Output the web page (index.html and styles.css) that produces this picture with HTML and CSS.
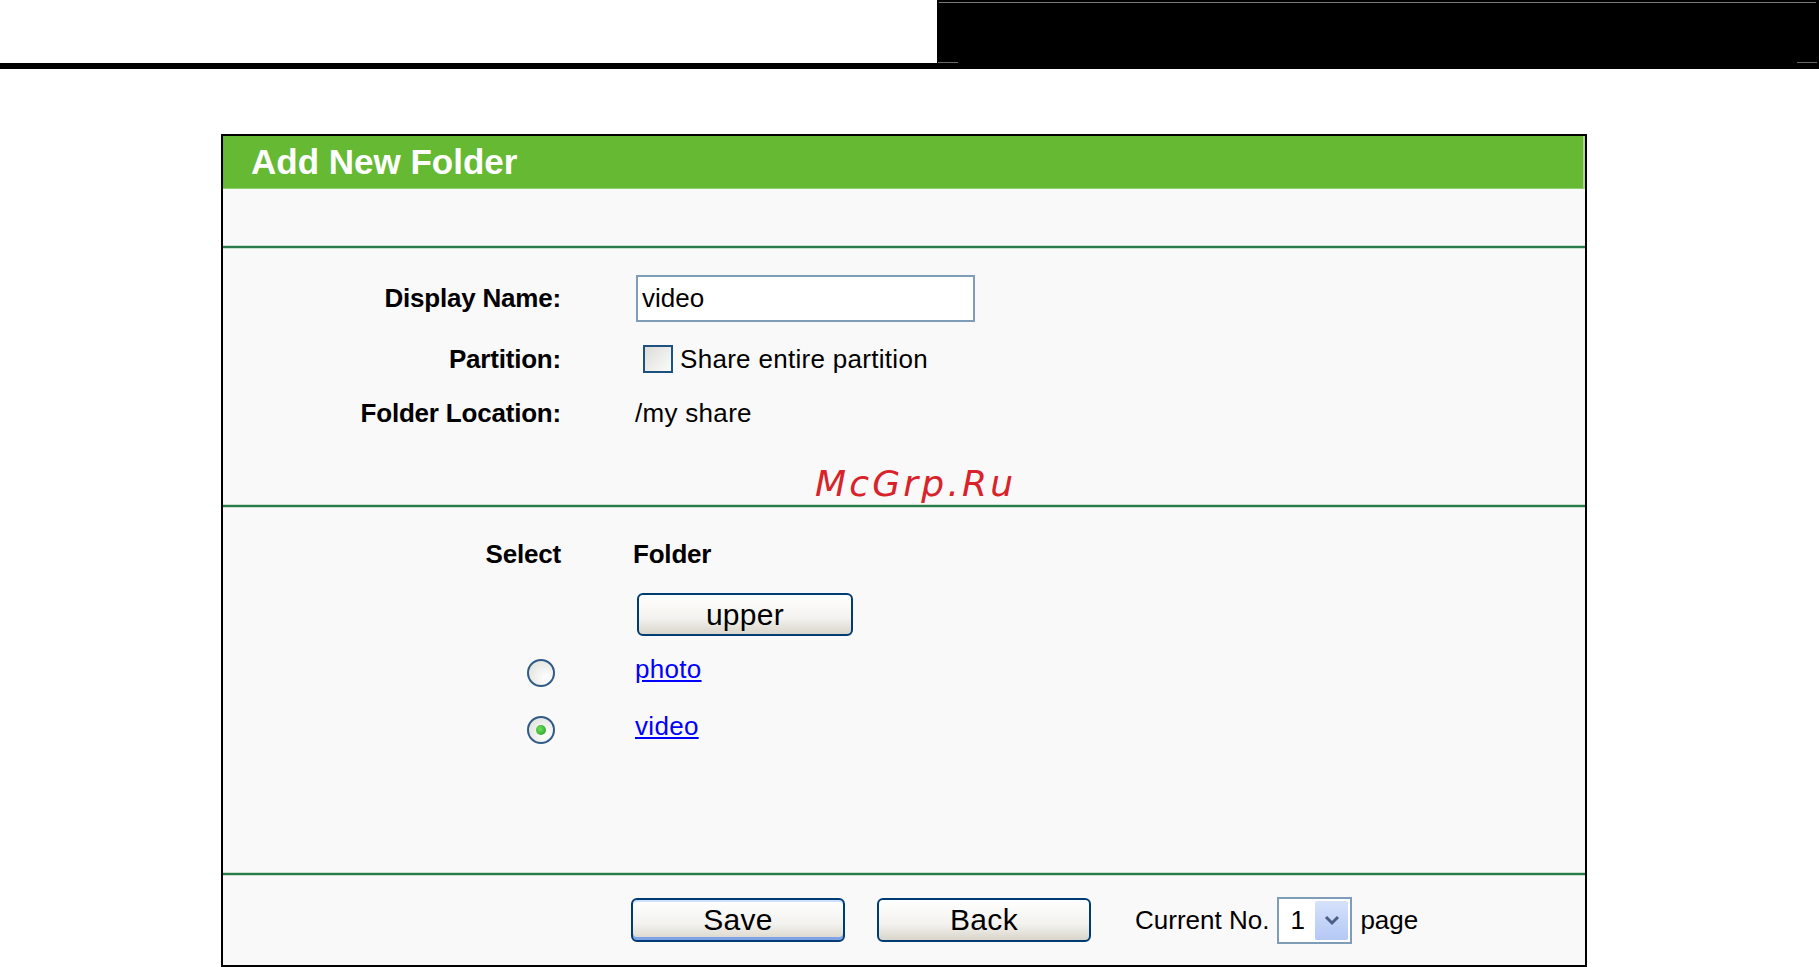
FILE: index.html
```html
<!DOCTYPE html>
<html lang="en">
<head>
  <meta charset="UTF-8" />
  <title>Add New Folder</title>
  <link rel="stylesheet" href="styles.css">
</head>
<body>
  <div class="topbar">
    <div class="topbar-left"></div>
    <div class="topbar-right"></div>
  </div>

  <div class="panel">
    <div class="panel-title">Add New Folder</div>
    <div class="spacer"></div>
    <div class="divider"></div>

    <div class="form-grid info">
      <div class="label">Display Name:</div>
      <div class="value"><input type="text" class="text-input" value="video"></div>

      <div class="label">Partition:</div>
      <div class="value"><span class="checkbox"></span><span class="check-text">Share entire partition</span></div>

      <div class="label">Folder Location:</div>
      <div class="value plain">/my share</div>
    </div>

    <div class="divider"></div>

    <div class="form-grid folders">
      <div class="label">Select</div>
      <div class="value head">Folder</div>

      <div class="label"></div>
      <div class="value"><button class="btn upper-btn">upper</button></div>

      <div class="label"><span class="radio"></span></div>
      <div class="value"><a href="#" class="folder-link">photo</a></div>

      <div class="label"><span class="radio checked"></span></div>
      <div class="value"><a href="#" class="folder-link">video</a></div>
    </div>

    <div class="divider"></div>

    <div class="footer">
      <button class="btn save-btn">Save</button>
      <button class="btn">Back</button>
      <span class="page-text">Current No.</span>
      <span class="page-select">
        <span class="page-num">1</span>
        <span class="page-arrow">
          <svg width="16" height="12" viewBox="0 0 16 12"><path d="M2 3 L8 9 L14 3" fill="none" stroke="#4b5f86" stroke-width="3"/></svg>
        </span>
      </span>
      <span class="page-text">page</span>
    </div>

    <div class="watermark">McGrp.Ru</div>
  </div>
</body>
</html>
```

FILE: styles.css
```css
body {
  margin: 0;
  background: #fff;
  font-family: "Liberation Sans", Arial, sans-serif;
  font-size: 26px;
  color: #000;
}

.topbar {
  display: flex;
  height: 69px;
}

.topbar-left {
  width: 937px;
  border-bottom: 6px solid #000;
  box-sizing: border-box;
}

.topbar-right {
  flex: 1;
  background: #000;
  position: relative;
}

.topbar-right::before {
  content: "";
  position: absolute;
  left: 2px;
  right: 3px;
  top: 2px;
  height: 1px;
  background: #7a7a7a;
}

.topbar-right::after {
  content: "";
  position: absolute;
  left: 1px;
  right: 2px;
  top: 62px;
  height: 1px;
  background: linear-gradient(to right, #6a6a6a 0, #6a6a6a 20px, transparent 20px, transparent calc(100% - 20px), #6a6a6a calc(100% - 20px));
}

.panel {
  position: relative;
  margin: 65px 0 0 221px;
  width: 1362px;
  height: 829px;
  border: 2px solid #000;
  background: #f9f9f9;
}

.panel-title {
  height: 52px;
  line-height: 52px;
  padding-left: 28px;
  background: #66b933;
  border-right: 2px solid #a9d98e;
  border-bottom: 1px solid #8fcf6c;
  color: #fff;
  font-size: 35px;
  font-weight: bold;
}

.spacer {
  height: 57px;
}

.divider {
  height: 2px;
  background: #2a7a4b;
  box-shadow: 0 1px 0 #c9e0cf, 0 -1px 0 #c9e0cf;
}

.form-grid {
  display: grid;
  grid-template-columns: 338px 1fr;
  column-gap: 74px;
  align-items: center;
  box-sizing: border-box;
}

.info {
  height: 257px;
  padding-top: 22px;
  grid-template-rows: 56px 66px 42px;
  align-content: start;
}

.folders {
  height: 366px;
  padding-top: 23px;
  grid-template-rows: 48px 73px 44px 70px;
  align-content: start;
}

.label {
  text-align: right;
  font-weight: bold;
  letter-spacing: -0.2px;
  display: flex;
  justify-content: flex-end;
  align-items: center;
}

.value {
  display: flex;
  align-items: center;
  letter-spacing: 0.3px;
}

.value.head {
  font-weight: bold;
  letter-spacing: -0.2px;
  margin-left: -2px;
}

.text-input {
  width: 339px;
  height: 47px;
  box-sizing: border-box;
  margin-left: 1px;
  padding: 0 4px;
  border: 2px solid #7f9db9;
  background: #fff;
  font-family: inherit;
  font-size: 26px;
  color: #000;
  outline: none;
}

.checkbox {
  width: 30px;
  height: 28px;
  box-sizing: border-box;
  margin-left: 8px;
  border: 2px solid #1c5180;
  background: linear-gradient(135deg, #dcdcd7, #fbfbfa);
}

.check-text {
  margin-left: 7px;
}

.btn {
  width: 214px;
  height: 44px;
  border: 2px solid #003c74;
  border-radius: 6px;
  background: linear-gradient(#ffffff, #f3f2ee 60%, #d9d5cb);
  font-family: inherit;
  font-size: 30px;
  color: #000;
  padding: 0;
  letter-spacing: 0.3px;
}

.upper-btn {
  width: 216px;
  height: 43px;
  margin-left: 2px;
}

.radio {
  width: 28px;
  height: 28px;
  box-sizing: border-box;
  margin-right: 6px;
  border: 2px solid #2f5b86;
  border-radius: 50%;
  background: radial-gradient(circle at 70% 70%, #fff, #dcdcd7);
  position: relative;
}

.radio.checked::after {
  content: "";
  position: absolute;
  left: 7px;
  top: 7px;
  width: 10px;
  height: 10px;
  border-radius: 50%;
  background: radial-gradient(circle at 40% 40%, #6fdc5e, #1e9b1e);
}

.folder-link {
  color: #0000ff;
  text-decoration: underline;
  margin-bottom: 8px;
}

.footer {
  height: 90px;
  display: flex;
  align-items: center;
  padding-left: 408px;
}

.save-btn {
  box-shadow: inset 0 -3px 0 #7ea3e8, inset 0 2px 0 #cfe0fa;
}

.footer .btn + .btn {
  margin-left: 32px;
}

.page-text {
  margin-left: 44px;
}

.page-text:last-child {
  margin-left: 8px;
}

.page-select {
  display: flex;
  align-items: center;
  justify-content: space-between;
  width: 75px;
  height: 47px;
  box-sizing: border-box;
  margin-left: 8px;
  padding: 2px;
  border: 2px solid #7f9db9;
  background: #fff;
}

.page-num {
  margin-left: 9px;
}

.page-arrow {
  width: 33px;
  height: 39px;
  display: flex;
  align-items: center;
  justify-content: center;
  border-radius: 2px;
  background: linear-gradient(#d6e2fc, #b4c8f5);
}

.watermark {
  position: absolute;
  left: 592px;
  top: 330px;
  font-family: "DejaVu Sans", sans-serif;
  font-style: italic;
  font-size: 36px;
  line-height: 1;
  letter-spacing: 3.2px;
  color: #d8232a;
}
```
